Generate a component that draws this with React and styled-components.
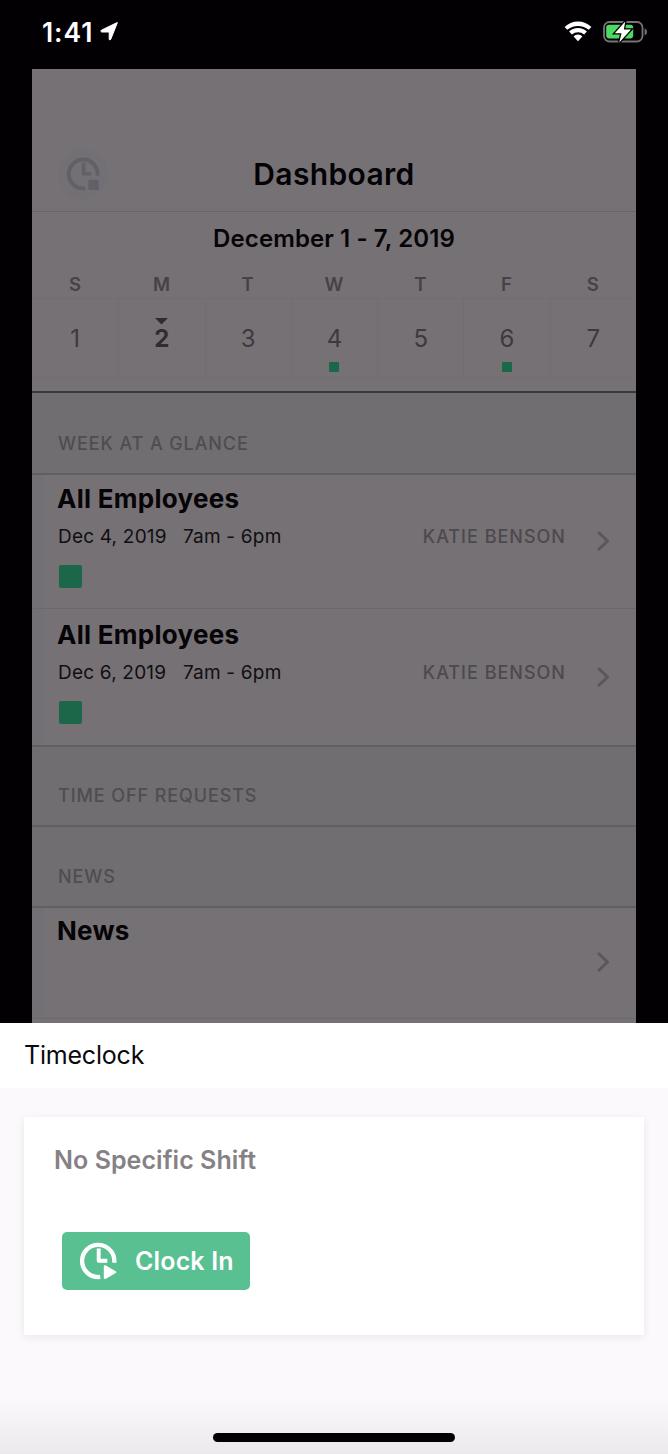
import styled, { createGlobalStyle } from 'styled-components';

const days = [
    { letter: 'S', date: 1 },
    { letter: 'M', date: 2, today: true },
    { letter: 'T', date: 3 },
    { letter: 'W', date: 4, shift: true },
    { letter: 'T', date: 5 },
    { letter: 'F', date: 6, shift: true },
    { letter: 'S', date: 7 },
];

const shifts = [
    { date: 'Dec 4, 2019', time: '7am - 6pm', name: 'KATIE BENSON' },
    { date: 'Dec 6, 2019', time: '7am - 6pm', name: 'KATIE BENSON' },
];

const ClockIcon = ({ size, color, stopped }) => (
    <svg width={size} height={size} viewBox="0 0 38 38" fill="none" stroke={color}>
        <path d="M21.2 34.9A16.1 16.1 0 1 1 35.2 20.7" strokeWidth="4.3" />
        <path d="M19.7 6.5V18.8H28.3" strokeWidth="3.9" strokeLinejoin="round" />
        {stopped ? (
            <rect x="25" y="25.5" width="11.5" height="11.5" rx="1" fill={color} stroke="none" />
        ) : (
            <path d="M25.9 24.3V36L36.2 30.1Z" fill={color} strokeWidth="2.2" strokeLinejoin="round" />
        )}
    </svg>
);

const Chevron = () => (
    <svg width="14" height="22" viewBox="0 0 14 22" fill="none" stroke="#5b575b" strokeWidth="3" strokeLinecap="round" strokeLinejoin="round">
        <path d="M3 2.8L11.5 11L3 19.2" />
    </svg>
);

const App = () => {
    return (
        <Screen>
            <GlobalStyle />
            <StatusBar>
                <Time>1:41</Time>
                <LocationIcon width="19" height="19" viewBox="0 0 19 19">
                    <path d="M17.2 1L10.8 17.2Q10 18.8 9.2 17.4V10H1.6Q0 9.3 1.4 8.2L16.6 .8Q17.8 .2 17.2 1Z" fill="#fff" stroke="#fff" strokeLinejoin="round" />
                </LocationIcon>
                <StatusIcons>
                    <svg width="28" height="21" viewBox="0 0 28 21" fill="#fff">
                        <path d="M14 .5C8.8 .5 4 2.5 .6 6L3.3 8.8Q7.8 4.9 14 4.9T24.7 8.8L27.4 6C24 2.5 19.2 .5 14 .5Z" />
                        <path d="M14 7C10.5 7 7.3 8.4 5.1 10.6L7.9 13.6Q10.6 11.3 14 11.3T20.1 13.6L22.9 10.6C20.7 8.4 17.5 7 14 7Z" />
                        <path d="M14 13.5C12.2 13.5 10.7 14.3 9.6 15.5L14 20.2L18.4 15.5C17.3 14.3 15.8 13.5 14 13.5Z" />
                    </svg>
                    <svg width="45" height="24" viewBox="0 0 45 24">
                        <rect x="1" y="2" width="38.5" height="19.5" rx="5.5" fill="none" stroke="#777379" strokeWidth="1.8" />
                        <path d="M41.6 8.3Q44 9.4 44 12T41.6 15.5Z" fill="#777379" />
                        <rect x="3.2" y="4.8" width="27" height="13.6" rx="2.8" fill="#4cd964" />
                        <path d="M22.2 1.6L11.8 13.3H18.5L16.3 22.4L28 9.5H20.9Z" fill="#fff" stroke="#000" strokeWidth="2.6" paintOrder="stroke" />
                    </svg>
                </StatusIcons>
            </StatusBar>

            <Dashboard>
                <NavBar>
                    <NavButton>
                        <ClockIcon size={34} color="#625f67" stopped />
                    </NavButton>
                    <NavTitle>Dashboard</NavTitle>
                </NavBar>
                <Calendar>
                    <WeekTitle>December 1 - 7, 2019</WeekTitle>
                    <Week>
                        {days.map((day) => (
                            <DayLetter key={day.date}>{day.letter}</DayLetter>
                        ))}
                    </Week>
                    <Week>
                        {days.map((day) => (
                            <Day key={day.date}>
                                <Marker>
                                    {day.today && (
                                        <svg width="13" height="7" viewBox="0 0 13 7">
                                            <path d="M0 0H13L6.5 6.5Z" fill="#302c31" />
                                        </svg>
                                    )}
                                </Marker>
                                <DayNumber $today={day.today}>{day.date}</DayNumber>
                                {day.shift && <Dot />}
                            </Day>
                        ))}
                    </Week>
                </Calendar>

                <SectionHeader $height={82}>WEEK AT A GLANCE</SectionHeader>
                {shifts.map((shift, i) => (
                    <Row key={shift.date} $height={i === 0 ? 134 : 138} $top={i === 0 ? 8 : 10} $last={i === 1}>
                        <RowTitle>All Employees</RowTitle>
                        <RowInfo>
                            <ShiftDate>{shift.date}</ShiftDate>
                            <ShiftTime>{shift.time}</ShiftTime>
                            <Employee>{shift.name}</Employee>
                            <Chevron />
                        </RowInfo>
                        <ColorBox />
                    </Row>
                ))}
                <SectionHeader $height={80}>TIME OFF REQUESTS</SectionHeader>
                <SectionHeader $height={81}>NEWS</SectionHeader>
                <Row $height={111} $top={7}>
                    <RowTitle>News</RowTitle>
                    <NewsInfo>
                        <Chevron />
                    </NewsInfo>
                </Row>
            </Dashboard>

            <Sheet>
                <SheetHeader>Timeclock</SheetHeader>
                <Card>
                    <CardTitle>No Specific Shift</CardTitle>
                    <ClockInButton>
                        <ClockIcon size={38} color="#fff" />
                        <span>Clock In</span>
                    </ClockInButton>
                </Card>
                <HomeIndicator />
            </Sheet>
        </Screen>
    );
};

const GlobalStyle = createGlobalStyle`
  * {
    box-sizing: border-box;
  }
  body {
    margin: 0;
    background: #000;
    font-family: Inter, "Liberation Sans", sans-serif;
  }
  svg {
    display: block;
    flex-shrink: 0;
  }
`;

const Screen = styled.main`
  display: flex;
  flex-direction: column;
  width: 668px;
  height: 1454px;
  overflow: hidden;
  background: #020003;
`;

const StatusBar = styled.header`
  display: flex;
  align-items: center;
  height: 69px;
  padding: 0 20px 6px 42px;
  flex-shrink: 0;
`;

const Time = styled.span`
  width: 52px;
  color: #fff;
  font-size: 26.5px;
  font-weight: 600;
  letter-spacing: 0.9px;
  white-space: nowrap;
`;

const LocationIcon = styled.svg`
  margin-left: 6px;
`;

const StatusIcons = styled.div`
  display: flex;
  align-items: center;
  gap: 11px;
  margin-left: auto;
`;

const Dashboard = styled.section`
  height: 954px;
  margin: 0 32px;
  overflow: hidden;
  flex-shrink: 0;
  background: #767175;
`;

const NavBar = styled.div`
  display: grid;
  grid-template-columns: 52px 1fr 52px;
  align-items: center;
  height: 143px;
  padding: 68px 26px 0;
  border-bottom: 1px solid #686468;
`;

const NavButton = styled.div`
  display: flex;
  align-items: center;
  justify-content: center;
  width: 50px;
  height: 50px;
  border-radius: 50%;
  background: #727075;
`;

const NavTitle = styled.h1`
  margin: 0;
  color: #040205;
  font-size: 30px;
  font-weight: 600;
  letter-spacing: 0.35px;
  text-align: center;
`;

const Calendar = styled.div`
  height: 181px;
  border-bottom: 2px solid #3b373b;
`;

const WeekTitle = styled.h2`
  margin: 0;
  padding-top: 11px;
  height: 60px;
  color: #060407;
  font-size: 24px;
  line-height: 32px;
  font-weight: 600;
  letter-spacing: 0.1px;
  text-align: center;
`;

const Week = styled.div`
  display: grid;
  grid-template-columns: repeat(7, 1fr);
`;

const DayLetter = styled.div`
  height: 26px;
  color: #464247;
  font-size: 18.5px;
  line-height: 25px;
  font-weight: 600;
  text-align: center;
`;

const Day = styled.div`
  display: flex;
  flex-direction: column;
  align-items: center;
  height: 80px;
  border: 1px solid #716d71;
  border-width: 1px 0 1px 1px;

  &:first-child {
    border-left: 0;
  }
`;

const Marker = styled.div`
  height: 25px;
  padding-top: 19px;
`;

const DayNumber = styled.div`
  height: 38px;
  color: ${(props) => (props.$today ? '#302c31' : '#3e393e')};
  font-size: 24px;
  line-height: 30px;
  font-weight: ${(props) => (props.$today ? 700 : 400)};
`;

const Dot = styled.div`
  width: 10px;
  height: 10px;
  border-radius: 1px;
  background: #1c674a;
`;

const SectionHeader = styled.h3`
  display: flex;
  align-items: flex-end;
  height: ${(props) => props.$height}px;
  margin: 0;
  padding: 0 26px 17px;
  background: #706e71;
  border-bottom: 2px solid #625f62;
  color: #504c50;
  font-size: 18px;
  line-height: 24px;
  font-weight: 500;
  letter-spacing: 0.9px;
`;

const Row = styled.article`
  height: ${(props) => props.$height}px;
  padding: ${(props) => props.$top}px 26px 0;
  background: linear-gradient(to right, #727074 12px, transparent 12px);
  border-bottom: ${(props) => (props.$last ? '2px solid #625f62' : '1px solid #6c686c')};
`;

const RowTitle = styled.h4`
  margin: 0 0 0 -1px;
  color: #060407;
  font-size: 26px;
  line-height: 32px;
  font-weight: 700;
  letter-spacing: 0.27px;
`;

const RowInfo = styled.div`
  display: flex;
  height: 50px;
  padding-top: 10px;
  color: #110e12;
  font-size: 19px;
  line-height: 24px;
  white-space: nowrap;

  svg {
    margin: 5px 0 0 30px;
  }
`;

const ShiftDate = styled.span`
  width: 125px;
  letter-spacing: 0.2px;
`;

const ShiftTime = styled.span`
  letter-spacing: 0.2px;
`;

const Employee = styled.span`
  margin-left: auto;
  color: #4d494d;
  font-size: 18px;
  font-weight: 500;
  letter-spacing: 1px;
`;

const ColorBox = styled.div`
  width: 23px;
  height: 23px;
  margin-left: 1px;
  border-radius: 2px;
  background: #1c674a;
`;

const NewsInfo = styled.div`
  display: flex;
  justify-content: flex-end;
  padding-top: 4px;
`;

const Sheet = styled.section`
  display: flex;
  flex-direction: column;
  flex: 1;
  background: linear-gradient(to top, #ebe9ec, #fbf9fc 56px);
`;

const SheetHeader = styled.h2`
  height: 65px;
  margin: 0;
  padding-left: 24px;
  background: #fff;
  color: #0b090c;
  font-size: 25px;
  line-height: 65px;
  font-weight: 400;
  letter-spacing: -0.2px;
`;

const Card = styled.div`
  height: 218px;
  margin: 29px 24px 0;
  padding: 28px 30px;
  background: #fff;
  box-shadow: 0 2px 8px rgba(40, 20, 40, 0.08);
`;

const CardTitle = styled.h3`
  margin: 0;
  color: #858185;
  font-size: 25px;
  line-height: 31px;
  font-weight: 600;
  letter-spacing: 0.05px;
`;

const ClockInButton = styled.button`
  display: flex;
  align-items: center;
  gap: 18px;
  width: 188px;
  height: 58px;
  margin: 56px 0 0 8px;
  padding: 0 0 0 17px;
  border: 0;
  border-radius: 5px;
  background: #59c092;
  color: #fff;
  font-family: inherit;
  font-size: 25px;
  font-weight: 600;
  letter-spacing: 0.15px;
  white-space: nowrap;
`;

const HomeIndicator = styled.div`
  width: 242px;
  height: 9px;
  margin: auto auto 12px;
  border-radius: 5px;
  background: #020003;
`;

export default App;
